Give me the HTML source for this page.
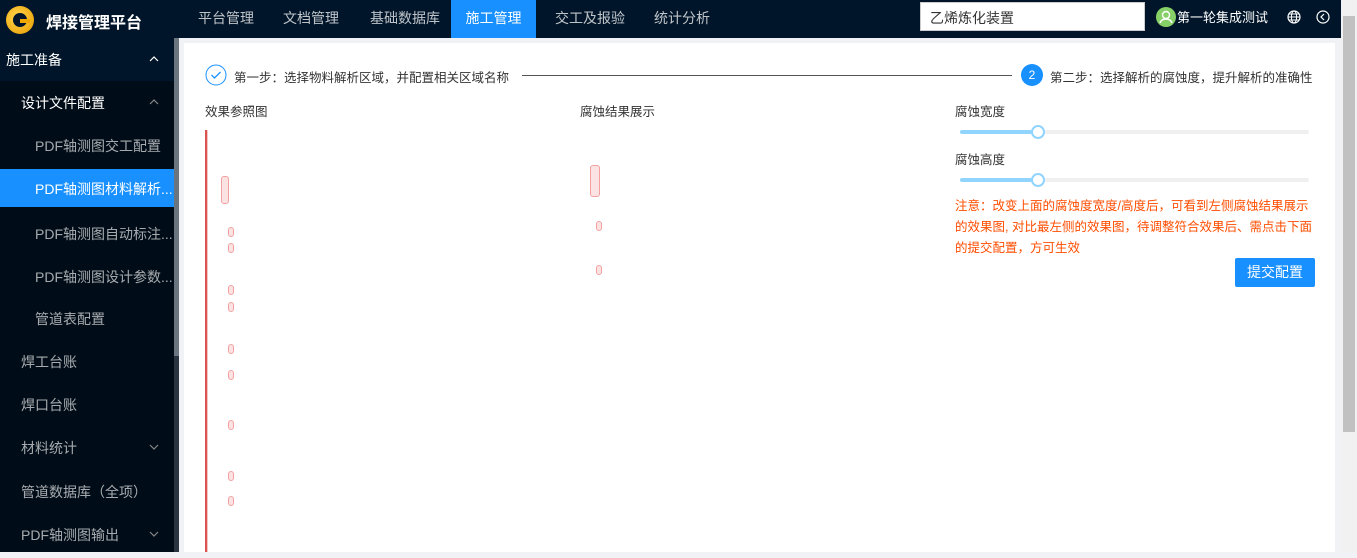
<!DOCTYPE html>
<html><head><meta charset="utf-8"><style>
*{margin:0;padding:0;box-sizing:border-box}
body{width:1357px;height:552px;overflow:hidden;font-family:"Liberation Sans","Noto Sans CJK SC",sans-serif;font-size:14px;background:#f0f2f5;position:relative}
.top{position:absolute;left:0;top:0;width:1341px;height:38px;background:#001529;color:#fff}
.logo{position:absolute;left:6px;top:6px;width:28px;height:28px;border-radius:50%;background:radial-gradient(circle at 40% 40%,#ffd54a,#e89a00)}
.logo:after{content:"";position:absolute;left:7px;top:7px;width:14px;height:14px;border-radius:50%;background:#001529}
.logo:before{content:"";position:absolute;left:14px;top:13px;width:10px;height:4px;background:#f0a800;z-index:2}
.title{position:absolute;left:46px;top:9px;font-size:16px;font-weight:bold}
.nav{position:absolute;top:0;height:38px;line-height:36px;font-size:14px;color:rgba(255,255,255,.75)}
.nav.act{background:#1890ff;color:#fff;width:85px;text-align:center}
.search{position:absolute;left:920px;top:2px;width:225px;height:29px;background:#fff;border:1px solid #ccc;color:#333;padding:5px 9px;font-size:14px}
.av{position:absolute;left:1156px;top:7px;width:20px;height:20px;border-radius:50%;background:#87d068}
.side{position:absolute;left:0;top:38px;width:174px;height:514px;background:#000c17;color:rgba(255,255,255,.65)}
.si{position:absolute;left:0;width:174px;height:43px;line-height:45px;font-size:14px}
.arr{position:absolute;right:15px;top:18px;width:10px;height:6px}
.sb{position:absolute;left:174px;top:38px;width:5px;height:514px;background:#2a3440}
.sb:before{content:"";position:absolute;left:0;top:0;width:5px;height:318px;background:#6b7580}
.main{position:absolute;left:184px;top:43px;width:1151px;height:509px;background:#fff}
.rs{position:absolute;left:1341px;top:0;width:16px;height:552px;background:#f1f1f1}
.rs:before{content:"";position:absolute;left:2px;top:16px;width:12px;height:416px;background:#c1c1c1}
.t{position:absolute;font-size:12.5px;color:#333;white-space:nowrap}
.track{position:absolute;left:960px;width:349px;height:4px;border-radius:2px;background:#f0f0f0}
.track i{position:absolute;left:0;top:0;width:77px;height:4px;background:#91d5ff;border-radius:2px}
.track b{position:absolute;left:71px;top:-5px;width:14px;height:14px;border-radius:50%;background:#fff;border:2px solid #91d5ff}
.mk{position:absolute;width:6px;height:10px;border:1.5px solid #f5a0a0;border-radius:3px;background:#fbe3e3}
</style></head><body>
<div class="top">
<div class="logo"></div><div class="title">焊接管理平台</div>
<div class="nav" style="left:198px">平台管理</div>
<div class="nav" style="left:283px">文档管理</div>
<div class="nav" style="left:370px">基础数据库</div>
<div class="nav act" style="left:451px">施工管理</div>
<div class="nav" style="left:555px">交工及报验</div>
<div class="nav" style="left:654px">统计分析</div>
<div class="search">乙烯炼化装置</div>
<div class="av"><svg width="20" height="20" viewBox="0 0 20 20"><circle cx="10" cy="8" r="3.5" fill="none" stroke="#fff" stroke-width="1.4"/><path d="M4 16c1-3 3.5-4 6-4s5 1 6 4" fill="none" stroke="#fff" stroke-width="1.4"/></svg></div>
<div class="nav" style="left:1177px;color:#fff;font-size:13px">第一轮集成测试</div>
<svg style="position:absolute;left:1287px;top:10px" width="14" height="14" viewBox="0 0 14 14"><circle cx="7" cy="7" r="6" fill="none" stroke="#fff" stroke-width="1.2"/><ellipse cx="7" cy="7" rx="2.6" ry="6" fill="none" stroke="#fff"/><path d="M1 7h12M2 4h10M2 10h10" stroke="#fff"/></svg>
<svg style="position:absolute;left:1316px;top:10px" width="14" height="14" viewBox="0 0 14 14"><circle cx="7" cy="7" r="6" fill="none" stroke="#fff" stroke-width="1.2"/><path d="M8 4L5 7l3 3" fill="none" stroke="#fff" stroke-width="1.2"/></svg>
</div>
<div class="side">
<div class="si" style="top:0;background:#001529;color:#fff;padding-left:6px">施工准备<svg class="arr" viewBox="0 0 10 6"><path d="M1 5l4-4 4 4" fill="none" stroke="#fff" stroke-width="1.2"/></svg></div>
<div class="si" style="top:43px;padding-left:21px;color:#fff">设计文件配置<svg class="arr" viewBox="0 0 10 6"><path d="M1 5l4-4 4 4" fill="none" stroke="#888" stroke-width="1.2"/></svg></div>
<div class="si" style="top:86px;padding-left:35px">PDF轴测图交工配置</div>
<div class="si" style="top:131px;padding-left:35px;background:#1890ff;color:#fff;height:38px;line-height:40px">PDF轴测图材料解析...</div>
<div class="si" style="top:174px;padding-left:35px">PDF轴测图自动标注...</div>
<div class="si" style="top:217px;padding-left:35px">PDF轴测图设计参数...</div>
<div class="si" style="top:259px;padding-left:35px">管道表配置</div>
<div class="si" style="top:302px;padding-left:21px">焊工台账</div>
<div class="si" style="top:345px;padding-left:21px">焊口台账</div>
<div class="si" style="top:388px;padding-left:21px">材料统计<svg class="arr" viewBox="0 0 10 6"><path d="M1 1l4 4 4-4" fill="none" stroke="#888" stroke-width="1.2"/></svg></div>
<div class="si" style="top:432px;padding-left:21px">管道数据库（全项）</div>
<div class="si" style="top:475px;padding-left:21px">PDF轴测图输出<svg class="arr" viewBox="0 0 10 6"><path d="M1 1l4 4 4-4" fill="none" stroke="#888" stroke-width="1.2"/></svg></div>
</div>
<div class="sb"></div>
<div class="main"></div>
<div class="rs"></div>
<svg style="position:absolute;left:205px;top:64px" width="22" height="22" viewBox="0 0 22 22"><circle cx="11" cy="11" r="10" fill="none" stroke="#1890ff" stroke-width="1"/><path d="M6.5 11l3 3 6-6" fill="none" stroke="#1890ff" stroke-width="1.3"/></svg>
<div class="t" style="left:234px;top:67px">第一步：选择物料解析区域，并配置相关区域名称</div>
<div style="position:absolute;left:522px;top:75px;width:490px;height:1px;background:#555"></div>
<div style="position:absolute;left:1021px;top:64px;width:22px;height:22px;border-radius:50%;background:#1890ff;color:#fff;font-size:12px;text-align:center;line-height:22px">2</div>
<div class="t" style="left:1050px;top:67px">第二步：选择解析的腐蚀度，提升解析的准确性</div>
<div class="t" style="left:205px;top:101px">效果参照图</div>
<div class="t" style="left:580px;top:101px">腐蚀结果展示</div>
<div class="t" style="left:955px;top:101px">腐蚀宽度</div>
<div class="track" style="top:130px"><i></i><b></b></div>
<div class="t" style="left:955px;top:149px">腐蚀高度</div>
<div class="track" style="top:178px"><i></i><b></b></div>
<div class="t" style="left:955px;top:196px;color:#ff4d00;line-height:21px;white-space:normal;width:361px">注意：改变上面的腐蚀度宽度/高度后，可看到左侧腐蚀结果展示的效果图, 对比最左侧的效果图，待调整符合效果后、需点击下面的提交配置，方可生效</div>
<div style="position:absolute;left:1235px;top:258px;width:80px;height:29px;background:#1890ff;color:#fff;border-radius:2px;text-align:center;line-height:29px;font-size:14px">提交配置</div>
<div style="position:absolute;left:205px;top:130px;width:2px;height:422px;background:#d9534f"></div>
<div style="position:absolute;left:207px;top:130px;width:1px;height:422px;background:#f5c5c5"></div>
<div class="mk" style="left:221px;top:176px;height:28px;width:8px"></div>
<div class="mk" style="left:228px;top:227px"></div><div class="mk" style="left:228px;top:243px"></div>
<div class="mk" style="left:228px;top:285px"></div><div class="mk" style="left:228px;top:302px"></div>
<div class="mk" style="left:228px;top:344px"></div><div class="mk" style="left:228px;top:370px"></div>
<div class="mk" style="left:228px;top:420px"></div><div class="mk" style="left:228px;top:471px"></div>
<div class="mk" style="left:228px;top:496px"></div>
<div class="mk" style="left:590px;top:165px;height:32px;width:10px"></div>
<div class="mk" style="left:596px;top:221px"></div><div class="mk" style="left:596px;top:265px"></div>
</body></html>
